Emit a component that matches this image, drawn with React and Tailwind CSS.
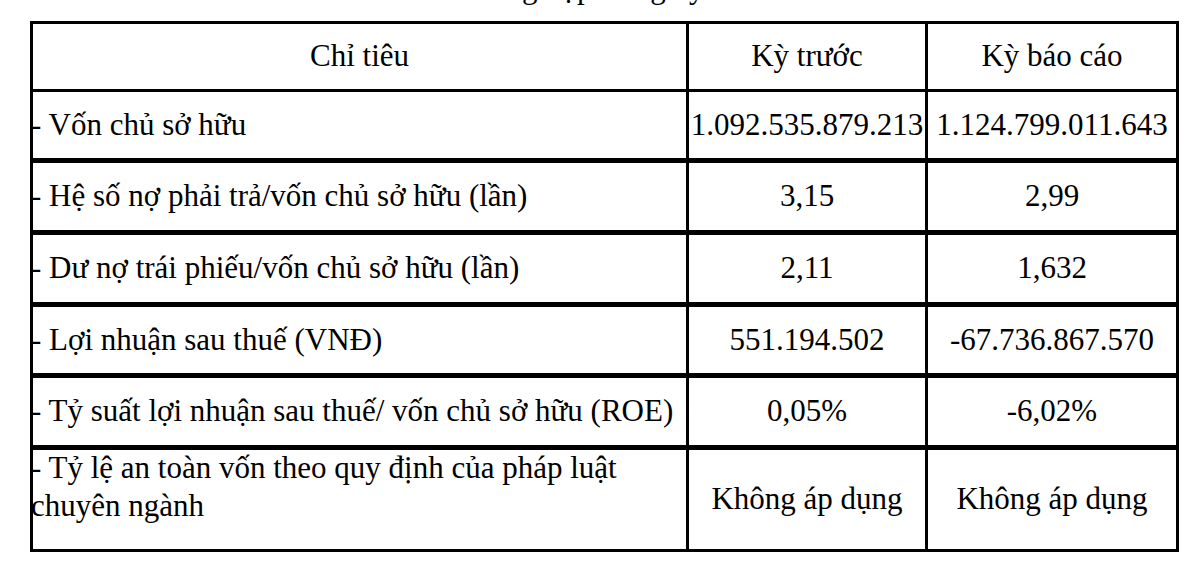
const rows = [
  { label: "- Vốn chủ sở hữu", prev: "1.092.535.879.213", cur: "1.124.799.011.643", rowClass: "h-[71px] border-b-[5px]" },
  { label: "- Hệ số nợ phải trả/vốn chủ sở hữu (lần)", prev: "3,15", cur: "2,99", rowClass: "h-[72px] border-b-[5px]" },
  { label: "- Dư nợ trái phiếu/vốn chủ sở hữu (lần)", prev: "2,11", cur: "1,632", rowClass: "h-[72px] border-b-[5px]" },
  { label: "- Lợi nhuận sau thuế (VNĐ)", prev: "551.194.502", cur: "-67.736.867.570", rowClass: "h-[71px] border-b-[5px]" },
  { label: "- Tỷ suất lợi nhuận sau thuế/ vốn chủ sở hữu (ROE)", prev: "0,05%", cur: "-6,02%", rowClass: "h-[72px] border-b-[5px]" },
];

export default function App() {
  return (
    <div className="w-[1200px] h-[564px] bg-white text-black font-[family-name:Liberation_Serif,Times_New_Roman,serif] text-[31px] overflow-hidden">
      {/* caption above, cut off at the top edge */}
      <div className="h-[21px] overflow-hidden">
        <p className="-mt-[28px] leading-[31px] whitespace-nowrap pl-[472px]">Tổng hợp trong kỳ báo cáo</p>
      </div>

      <div className="ml-[30px] w-[1149px] border-[3px] border-black">
        {/* header */}
        <div className="flex h-[68px] border-b-[3px] border-black">
          <div className="w-[656px] border-r-[3px] border-black flex items-center justify-center">Chỉ tiêu</div>
          <div className="w-[239px] border-r-[3px] border-black flex items-center justify-center">Kỳ trước</div>
          <div className="flex-1 flex items-center justify-center">Kỳ báo cáo</div>
        </div>

        {rows.map((r) => (
          <div key={r.label} className={`flex border-black ${r.rowClass}`}>
            <div className="w-[656px] border-r-[3px] border-black flex items-center">
              <span className="-ml-[2px] whitespace-nowrap">{r.label}</span>
            </div>
            <div className="w-[239px] border-r-[3px] border-black flex items-center justify-center whitespace-nowrap">{r.prev}</div>
            <div className="flex-1 flex items-center justify-center whitespace-nowrap">{r.cur}</div>
          </div>
        ))}

        {/* last row: label wraps onto two lines */}
        <div className="flex h-[99px]">
          <div className="w-[656px] border-r-[3px] border-black">
            <p className="-mt-[1px] -ml-[2px] leading-[38px]">
              - Tỷ lệ an toàn vốn theo quy định của pháp luật
              <br />
              chuyên ngành
            </p>
          </div>
          <div className="w-[239px] border-r-[3px] border-black flex items-center justify-center">Không áp dụng</div>
          <div className="flex-1 flex items-center justify-center">Không áp dụng</div>
        </div>
      </div>
    </div>
  );
}
